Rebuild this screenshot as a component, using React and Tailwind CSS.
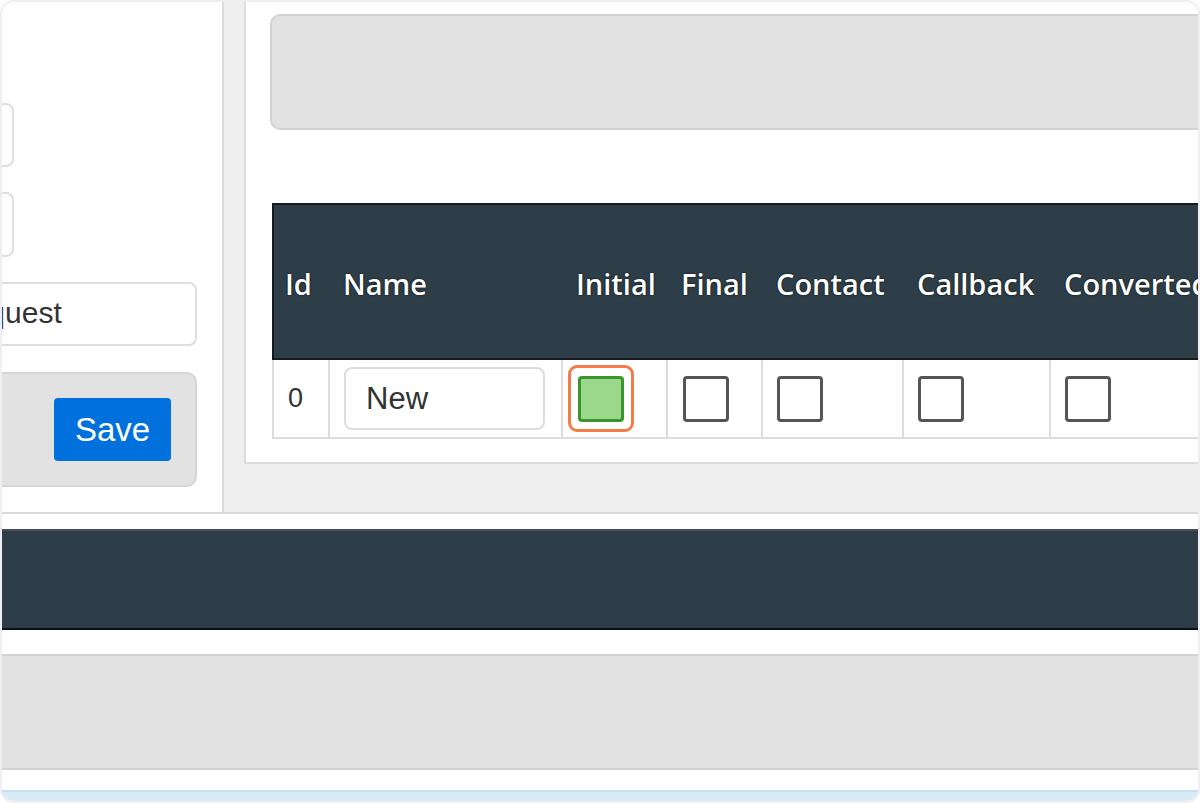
import { useState } from "react";

const columns = [
  { key: "id", label: "Id", width: "w-[56px]" },
  { key: "name", label: "Name", width: "w-[233px]" },
  { key: "initial", label: "Initial", width: "w-[105px]" },
  { key: "final", label: "Final", width: "w-[95px]" },
  { key: "contact", label: "Contact", width: "w-[141px]" },
  { key: "callback", label: "Callback", width: "w-[147px]" },
  { key: "converted", label: "Converted", width: "w-[170px]" },
];

function Box({ checked, onClick }) {
  return (
    <button
      onClick={onClick}
      className={
        checked
          ? "block w-[46px] h-[46px] rounded-[4px] border-[3px] border-[#3b952c] bg-[#9ad98c]"
          : "block w-[46px] h-[46px] rounded-[4px] border-[3px] border-[#555555] bg-white"
      }
    />
  );
}

export default function App() {
  const [row, setRow] = useState({
    name: "New",
    initial: true,
    final: false,
    contact: false,
    callback: false,
    converted: false,
  });

  const toggle = (field) => setRow((prev) => ({ ...prev, [field]: !prev[field] }));

  return (
    <div className="w-[1200px] h-[803px] overflow-hidden rounded-[14px] border-2 border-[#eeeef4] bg-white flex flex-col font-['Liberation_Sans',Arial,sans-serif]">
      {/* top area */}
      <div className="h-[512px] flex border-b-2 border-[#d9d9d9] bg-[#efefef]">
        {/* left form panel */}
        <div className="w-[222px] shrink-0 bg-white border-r-2 border-[#dcdcdc] overflow-hidden flex flex-col">
          <div className="mt-[101px] ml-[-100px] w-[112px] h-[64px] rounded-lg border-2 border-[#dedede] bg-white" />
          <div className="mt-[25px] ml-[-100px] w-[112px] h-[65px] rounded-lg border-2 border-[#dedede] bg-white" />
          <div className="mt-[25px] ml-[-70px] w-[265px] h-[64px] rounded-lg border-2 border-[#dedede] bg-white flex items-center pl-[16px] pb-[3px] text-[30px] text-[#333] whitespace-nowrap">
            Request
          </div>
          <div className="mt-[26px] ml-[-52px] w-[247px] h-[115px] rounded-[10px] border-2 border-[#d6d6d6] bg-[#e2e2e2] flex justify-end pt-[24px] pr-[24px]">
            <button className="w-[117px] h-[63px] rounded-[4px] bg-[#0070dc] text-white text-[33px] leading-none">
              Save
            </button>
          </div>
        </div>

        {/* gap strip */}
        <div className="w-[20px] shrink-0" />

        {/* right panel */}
        <div className="flex-1 self-start h-[462px] bg-white border-l-2 border-b-2 border-[#dcdcdc] overflow-hidden">
          <div className="mt-[12px] ml-[24px] w-[1000px] h-[116px] rounded-[10px] border-2 border-[#d2d2d2] bg-[#e1e1e1]" />

          <table className="mt-[73px] ml-[26px] table-fixed border-collapse w-[947px]">
            <thead>
              <tr className="h-[155px] bg-[#2d3e48]">
                {columns.map((c) => (
                  <th
                    key={c.key}
                    className={`${c.width} border-y-2 first:border-l-2 first:pl-[11px] border-[#141c22] pl-[14px] pr-0 text-left align-middle text-white font-semibold text-[29px] whitespace-nowrap font-['Open_Sans',sans-serif] [text-shadow:0_0_2px_#000]`}
                  >
                    <span className="block pt-[4px]">{c.label}</span>
                  </th>
                ))}
              </tr>
            </thead>
            <tbody>
              <tr className="h-[79px]">
                <td className="border-2 border-[#dddddd] px-[14px] text-[27px] text-[#333]">0</td>
                <td className="border-2 border-[#dddddd] px-[14px]">
                  <input
                    value={row.name}
                    onChange={(e) => setRow((prev) => ({ ...prev, name: e.target.value }))}
                    className="w-[201px] h-[63px] rounded-lg border-2 border-[#dddddd] px-[20px] text-[31px] text-[#333] outline-none"
                  />
                </td>
                <td className="border-2 border-[#dddddd] pl-[5px]">
                  <div className="w-[66px] h-[67px] rounded-[9px] border-[3px] border-[#f47c47] flex items-center justify-center">
                    <Box checked={row.initial} onClick={() => toggle("initial")} />
                  </div>
                </td>
                <td className="border-2 border-[#dddddd] pl-[15px]">
                  <Box checked={row.final} onClick={() => toggle("final")} />
                </td>
                <td className="border-2 border-[#dddddd] pl-[14px]">
                  <Box checked={row.contact} onClick={() => toggle("contact")} />
                </td>
                <td className="border-2 border-[#dddddd] pl-[14px]">
                  <Box checked={row.callback} onClick={() => toggle("callback")} />
                </td>
                <td className="border-2 border-[#dddddd] pl-[14px]">
                  <Box checked={row.converted} onClick={() => toggle("converted")} />
                </td>
              </tr>
            </tbody>
          </table>
        </div>
      </div>

      <div className="h-[15px] shrink-0" />
      {/* dark bar */}
      <div className="h-[101px] shrink-0 bg-[#2d3e48] border-t-2 border-b-2 border-t-[#4a4f55] border-b-[#0a111b]" />
      <div className="h-[24px] shrink-0" />
      {/* gray bar */}
      <div className="h-[116px] shrink-0 bg-[#e1e1e1] border-y-2 border-[#d2d2d2]" />
      <div className="h-[20px] shrink-0" />
      <div className="flex-1 bg-[#d8ecf6] border-t-2 border-[#c6e0ef]" />
    </div>
  );
}
